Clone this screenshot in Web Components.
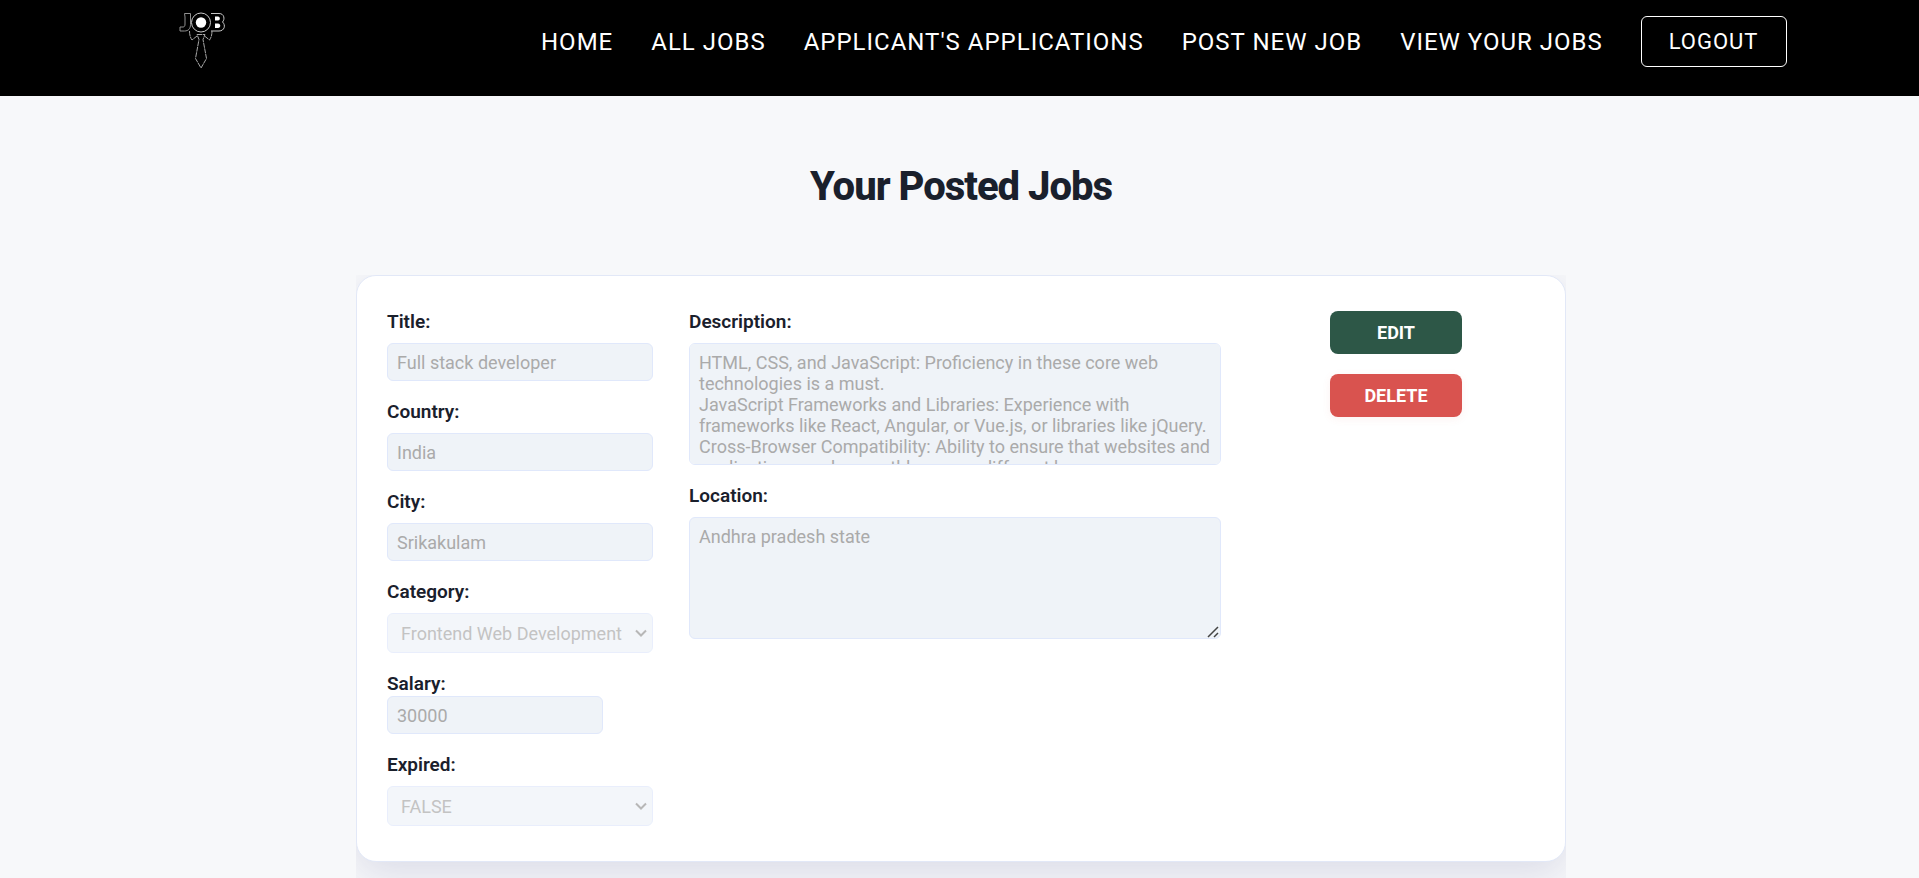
<!DOCTYPE html>
<html lang="en">
<head>
<meta charset="utf-8">
<title>Your Posted Jobs</title>
<style>
  body { margin: 0; background: #f7f8fa; color: #1a202c; font-family: Roboto, "Liberation Sans", sans-serif; }
</style>
</head>
<body>
<job-header></job-header>
<posted-jobs heading="Your Posted Jobs">
  <job-card></job-card>
</posted-jobs>
<script>
class Base extends HTMLElement {
  connectedCallback() {
    if (this.shadowRoot) return;
    this.attachShadow({ mode: "open" }).innerHTML = this.view();
  }
}

customElements.define("job-logo", class extends Base {
  view() {
    return `<style>:host{display:block}a,svg{display:block}</style>
    <a href="#" aria-label="Job">
    <svg width="48" height="60" viewBox="0 0 48 60" fill="none" stroke="#a8a8a8" stroke-width="1">
      <path d="M5.500 3.500h6v11c0 4-2 6.500-6 6.500h-4.500v-4h3c1.500 0 2-1 2-3v-7z" stroke="#909090"/>
      <circle cx="22" cy="12.500" r="9.500" stroke="#c8c8c8"/>
      <circle cx="22" cy="12.500" r="5.200" fill="#fff" stroke="none"/>
      <path d="M32 3.500h8c5.500 0 6 6 3.500 8.500 3.500 3 2 9-3.500 9h-8" stroke="#c8c8c8"/>
      <path d="M36 6.500h3c2.500 0 2.500 4 0 4h-3zM36 13.500h3c3 0 3 4.500 0 4.500h-3z" fill="#fff" stroke="none"/>
      <path d="M10.500 21c0 4 1 7 2.500 9l5-4M33 21c0 4-1 7-2.500 9l-5-4M18 24.500h8l-2 5 3.500 19-5.500 9.500-5.500-9.500 3.500-19z" stroke-dasharray="5 .6"/>
    </svg></a>`;
  }
});

customElements.define("job-header", class extends Base {
  view() {
    const links = ["Home", "All Jobs", "Applicant's Applications", "Post New Job", "View Your Jobs"];
    return `<style>
      :host{display:block;background:#000;color:#fff}
      header{display:flex;justify-content:space-between;align-items:flex-start;max-width:1654px;margin:0 auto;padding-bottom:26px}
      job-logo{padding-top:10px;padding-left:46px}
      nav{display:flex;align-items:center;gap:38px;padding-top:16px}
      a{color:#fff;text-decoration:none;text-transform:uppercase;font-size:24px;line-height:28px;letter-spacing:1px}
      button{font:22px/25px Roboto,sans-serif;letter-spacing:1px;text-transform:uppercase;color:#fff;background:transparent;border:1px solid #fff;border-radius:6px;padding:12px 27px;cursor:pointer}
    </style>
    <header><job-logo></job-logo><nav>${links.map(l => `<a href="#">${l}</a>`).join("")}<button type="button">Logout</button></nav></header>`;
  }
});

customElements.define("posted-jobs", class extends Base {
  view() {
    return `<style>
      :host{display:block;padding:64px 0 0 3px}
      h1{margin:0;text-align:center;font-size:40px;line-height:54px;font-weight:800;letter-spacing:-1px}
      .list{max-width:1210px;margin:61px auto 0;overflow:hidden;padding-bottom:16px}
    </style>
    <h1>${this.getAttribute("heading")}</h1><div class="list"><slot></slot></div>`;
  }
});

customElements.define("job-field", class extends Base {
  view() {
    const type = this.getAttribute("type") || "text";
    const value = this.getAttribute("value") || "";
    const control = type === "select"
      ? `<select id="c" disabled><option>${value}</option></select>`
      : type === "textarea"
      ? `<textarea id="c" disabled>${value}</textarea>`
      : `<input id="c" type="${type}" value="${value}" disabled>`;
    return `<style>
      :host{display:flex;flex-direction:column;gap:10px}
      :host([tight]){gap:1px}
      :host([tight]) input{width:216px}
      label{font-size:19px;line-height:22px;font-weight:600}
      input,select,textarea{box-sizing:border-box;width:100%;margin:0;font:18px/21px Roboto,sans-serif;color:#aaa;background:#eff3f8;border:1px solid #e0e8fb;border-radius:6px;padding:8px 9px}
      input{height:38px}
      select{appearance:none;height:40px;opacity:.7;padding:8px 13px;
        background:#eff3f8 url("data:image/svg+xml,%3Csvg xmlns='http://www.w3.org/2000/svg' width='12' height='9'%3E%3Cpath d='M1 1.500l5 5 5-5' fill='none' stroke='%23999' stroke-width='2'/%3E%3C/svg%3E") no-repeat right 5px center}
      textarea{display:block;height:122px}
      textarea::-webkit-resizer{background:url("data:image/svg+xml,%3Csvg xmlns='http://www.w3.org/2000/svg' width='15' height='15'%3E%3Cpath d='M3 14L13 4M9 14l4-4' fill='none' stroke='%23444' stroke-width='1.500'/%3E%3C/svg%3E") no-repeat right bottom}
      :host([fixed]) textarea{resize:none;scrollbar-width:none}
    </style>
    <label for="c">${this.getAttribute("label")}:</label>${control}`;
  }
});

customElements.define("job-card", class extends Base {
  view() {
    return `<style>
      :host{display:grid;grid-template-columns:266fr 532fr 278fr;gap:36px;background:#fff;border:1px solid #e2e8f7;border-radius:20px;padding:35px 30px;box-shadow:0 12px 40px rgba(60,60,130,.15)}
      .col{display:flex;flex-direction:column;gap:20px;min-width:0}
      .actions{align-items:center}
      button{width:132px;height:43px;border:0;border-radius:8px;color:#fff;font:bold 18px/21px Roboto,sans-serif;text-transform:uppercase;background:#2d5747;cursor:pointer}
      .delete{background:#d9534f;box-shadow:0 2px 8px rgba(217,83,79,.08)}
    </style>
    <div class="col">
      <job-field label="Title" value="Full stack developer"></job-field>
      <job-field label="Country" value="India"></job-field>
      <job-field label="City" value="Srikakulam"></job-field>
      <job-field label="Category" type="select" value="Frontend Web Development"></job-field>
      <job-field label="Salary" type="number" value="30000" tight></job-field>
      <job-field label="Expired" type="select" value="FALSE"></job-field>
    </div>
    <div class="col">
      <job-field label="Description" type="textarea" fixed value="HTML, CSS, and JavaScript: Proficiency in these core web technologies is a must.
JavaScript Frameworks and Libraries: Experience with frameworks like React, Angular, or Vue.js, or libraries like jQuery.
Cross-Browser Compatibility: Ability to ensure that websites and applications work smoothly across different browsers."></job-field>
      <job-field label="Location" type="textarea" value="Andhra pradesh state"></job-field>
    </div>
    <div class="col actions"><button type="button">Edit</button><button type="button" class="delete">Delete</button></div>`;
  }
});
</script>
</body>
</html>
